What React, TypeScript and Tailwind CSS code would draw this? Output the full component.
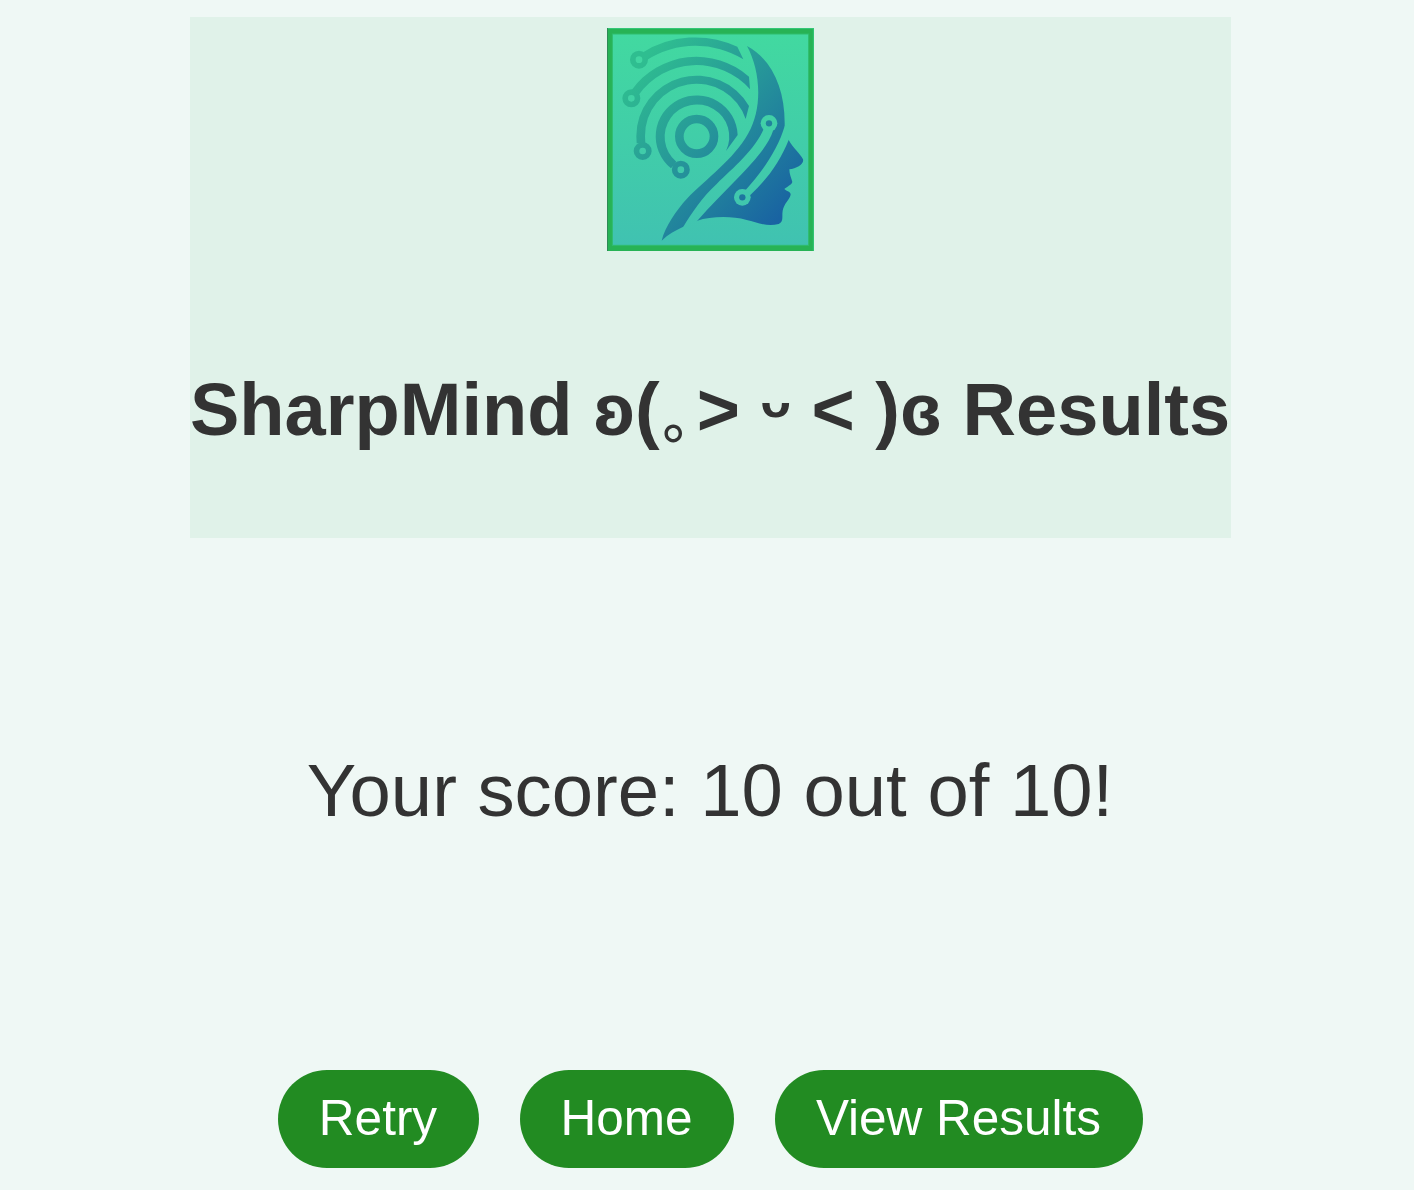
function Logo() {
  return (
    <svg className="block h-[223px] w-[207px]" viewBox="21 24 621 669" role="img" aria-label="SharpMind logo">
      <defs>
        <linearGradient id="tile" gradientUnits="userSpaceOnUse" x1="0" y1="40" x2="0" y2="676">
          <stop offset="0" stopColor="#42d9a0" />
          <stop offset="1" stopColor="#40c2b1" />
        </linearGradient>
        <linearGradient id="ink" gradientUnits="userSpaceOnUse" x1="100" y1="150" x2="560" y2="570">
          <stop offset="0" stopColor="#2fbe90" />
          <stop offset="0.5" stopColor="#25929a" />
          <stop offset="1" stopColor="#1963a2" />
        </linearGradient>
      </defs>
      <rect x="21" y="24" width="621" height="669" fill="#27b355" />
      <path d="M21 25.500H642M640 24V693" stroke="#35c777" strokeWidth="3" fill="none" />
      <path d="M22.500 24V693" stroke="#2e8a56" strokeWidth="3" />
      <rect x="37" y="42" width="589" height="634" fill="url(#tile)" stroke="#2fbd6c" strokeWidth="3" />
      <g fill="none" stroke="url(#ink)">
        <circle cx="290" cy="349" r="52" strokeWidth="26" />
        <g strokeWidth="17">
          <circle cx="242.500" cy="449" r="18.500" />
          <circle cx="128" cy="393" r="18.500" />
          <circle cx="94" cy="235" r="18.500" />
          <circle cx="117" cy="119" r="18.500" />
        </g>
      </g>
      <g fill="url(#ink)">
        <path d="M213 445A123 123 0 1 1 413 345L378 393A97 97 0 1 0 229 425Z" />
        <path d="M110 370L109 349A181 181 0 0 1 447 258L437 297A155 155 0 0 0 135 349L136 370Z" />
        <path d="M95 210A239 239 0 0 1 447 170L450 208A213 213 0 0 0 116 225Z" />
        <path d="M127 98A299 299 0 0 1 412 80L430 118A273 273 0 0 0 141 120Z" />
        <path d="M441 78C515 118 556 205 554 318L566 360C580 385 600 400 609 418C613 432 590 445 568 448C568 462 574 475 577 486C574 496 560 500 553 507C560 514 572 514 572 524C568 540 552 550 548 572C545 590 552 604 536 612C500 622 470 606 440 600C390 586 330 590 292 602L250 620C225 632 205 642 185 662C195 620 230 570 260 537C320 475 400 420 445 340C490 260 480 150 441 78Z" />
      </g>
      <g fill="url(#tile)">
        <path d="M492 325C465 390 400 443 350 492C305 533 275 580 250 620L262 640L292 602C330 558 370 520 410 478C460 425 504 380 520 330Z" />
        <path d="M435 512C488 455 535 385 554 318L590 330L566 360C540 425 500 480 451 525Z" />
        <circle cx="507" cy="310" r="25" />
        <circle cx="427" cy="532" r="25" />
      </g>
      <g fill="url(#ink)">
        <circle cx="507" cy="310" r="9.500" />
        <circle cx="427" cy="532" r="9.500" />
      </g>
    </svg>
  );
}

function PillButton({ label, size }: { label: string; size: string }) {
  return (
    <button className={`${size} h-[98px] rounded-full bg-[#228b22] pb-[3px] text-[49.5px] leading-none whitespace-nowrap text-white`}>
      {label}
    </button>
  );
}

export default function App() {
  return (
    <div className="flex h-[1190px] flex-col items-center bg-[#eff8f5] pl-[6px] pt-[17px] font-['Liberation_Sans',Arial,sans-serif] text-[#333333]">
      <header className="flex h-[521px] w-[1041px] flex-col items-center bg-[#e0f2e9] pt-[11px]">
        <Logo />
        <h1 className="mt-[117px] h-[84px] text-[74.05px] leading-[84px] font-bold whitespace-pre">
          SharpMind ʚ(
          <span className="relative top-[3px] inline-block w-[37px] pl-[3px] font-['Noto_Sans_CJK_JP',sans-serif] text-[56px] leading-none font-medium">｡</span>
          &gt; ᵕ &lt; )ɞ Results
        </h1>
      </header>
      <p className="mt-[211px] text-[74.25px] leading-[84px] whitespace-nowrap">Your score: 10 out of 10!</p>
      <div className="mt-[237px] flex gap-[41px]">
        <PillButton label="Retry" size="w-[201px]" />
        <PillButton label="Home" size="w-[214px]" />
        <PillButton label="View Results" size="w-[368px]" />
      </div>
    </div>
  );
}
